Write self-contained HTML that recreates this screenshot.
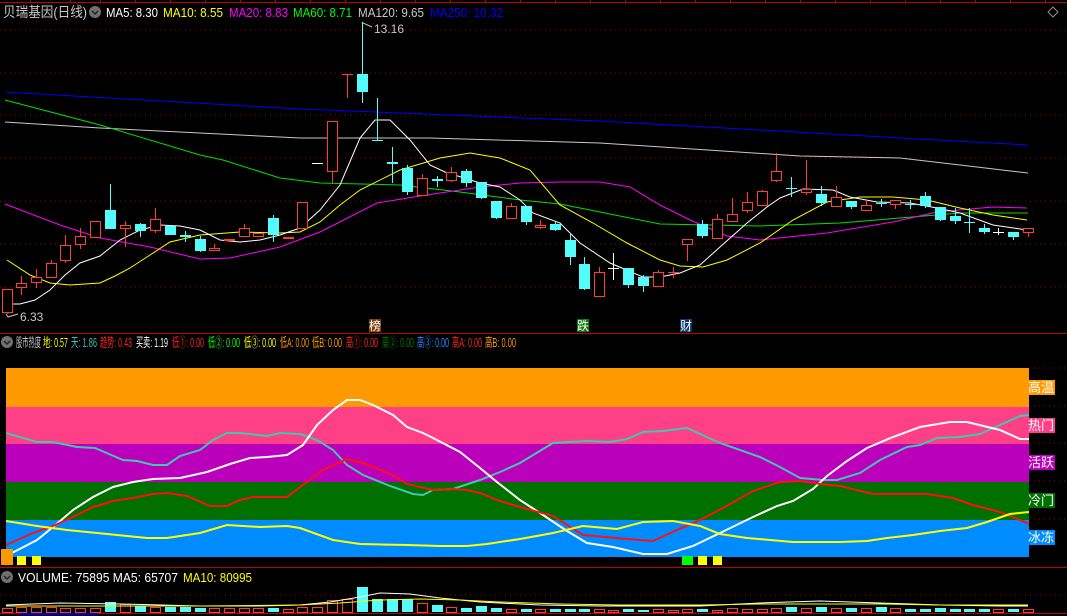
<!DOCTYPE html>
<html><head><meta charset="utf-8"><style>
html,body{margin:0;padding:0;background:#000;width:1067px;height:616px;overflow:hidden}
svg{display:block}
text{font-family:"Liberation Sans","Noto Sans CJK SC",sans-serif;font-size:12px}
</style></head><body>
<svg id="s" width="1067" height="616" xmlns="http://www.w3.org/2000/svg"></svg>
<script>
var o='';
function pl(pts,c,w){o+='<polyline fill="none" stroke="'+c+'" stroke-width="'+(w||1)+'" points="'+pts.map(function(p){return p.join(',')}).join(' ')+'"/>';}
function r(x,y,w,h,c){o+='<rect x="'+x+'" y="'+y+'" width="'+w+'" height="'+h+'" fill="'+c+'"/>';}
function t(x,y,s,c,fs,tl){o+='<text x="'+x+'" y="'+y+'" fill="'+c+'"'+(fs?' style="font-size:'+fs+'px"':'')+(tl?' textLength="'+tl+'" lengthAdjust="spacingAndGlyphs"':'')+'>'+s+'</text>';}
function dl(y,x1,x2){o+='<line x1="'+(x1||0)+'" y1="'+y+'" x2="'+(x2||1067)+'" y2="'+y+'" stroke="#a00000" stroke-dasharray="1 4"/>';}
r(0,2,1067,1,'#c00000');[30,70,100,135,170,205,240,275,310,345,380,415,450,485,520,555,590,625,660,695,730,765,800,835,870,905,940,975,1010,1045].forEach(function(x){r(x,0,1,2,'#c00000')});
[30,73,115,158,201,244,287].forEach(function(y){dl(y)});
pl([[5,92],[300,109],[600,121],[900,138],[1028,145]],'#0000ff');
pl([[5,122],[100,128],[300,138],[430,138],[600,143],[800,156],[900,158],[960,165],[1028,173]],'#c8c8c8');
pl([[5,100],[100,125],[200,155],[223,160],[280,178],[320,183],[400,185],[460,192],[520,200],[560,204],[600,212],[660,224],[760,226],[840,223],[900,218],[960,213],[1028,213]],'#00e000');
pl([[5,204],[60,225],[100,238],[150,247],[200,259],[230,258],[280,247],[320,232],[377,203],[420,196],[480,187],[520,183],[560,182],[600,182],[630,187],[660,205],[690,220],[727,236],[760,240],[827,233],[893,222],[937,212],[993,207],[1027,208]],'#ff00ff');
pl([[7,260],[30,275],[50,283],[70,285],[100,283],[115,276],[130,268],[150,255],[170,242],[200,235],[240,232],[280,233],[300,232],[320,222],[340,205],[360,190],[400,170],[440,158],[470,153],[500,158],[530,170],[560,205],[593,223],[627,243],[660,260],[680,266],[703,267],[727,260],[760,243],[793,220],[827,202],[860,197],[893,197],[927,200],[960,208],[993,215],[1027,220]],'#ffff00');
pl([[7,304],[20,304],[35,300],[50,290],[65,275],[80,263],[100,256],[120,240],[140,230],[160,225],[180,226],[200,230],[220,240],[240,242],[260,240],[280,235],[300,228],[320,210],[340,185],[360,138],[375,120],[390,120],[410,140],[430,165],[445,172],[480,183],[500,187],[520,200],[533,213],[560,223],[580,243],[610,263],[643,277],[660,277],[680,273],[700,265],[720,247],[747,223],[767,207],[780,198],[803,189],[833,190],[850,197],[877,202],[910,203],[937,208],[960,213],[993,225],[1027,230]],'#ffffff');
var C=[[7,289,313,289,314,'r'],[21,283,288,276,295,'r'],[36,277,283,269,288,'r'],[51,263,278,260,278,'r'],[65,245,261,235,263,'r'],[80,236,245,228,249,'r'],[95,221,238,221,238,'r'],[110,210,229,184,229,'c'],[125,225,229,221,247,'r'],[140,224,231,223,237,'c'],[155,219,231,208,233,'r'],[170,226,235,225,235,'c'],[185,235,237,231,242,'c'],[200,239,251,236,252,'c'],[214,248,251,244,251,'r'],[229,239,241,239,241,'r'],[244,228,237,224,237,'r'],[258,233,237,233,237,'r'],[273,218,235,215,242,'c'],[288,237,239,237,239,'r'],[302,202,229,202,229,'r'],[317,163,164,163,164,'w'],[332,121,172,121,184,'r'],[347,74,75,74,98,'r'],[362,74,92,22,103,'c'],[377,140,141,98,141,'c'],[392,162,164,147,183,'c'],[407,168,192,165,195,'c'],[422,178,196,174,196,'r'],[437,179,181,176,187,'c'],[451,172,181,167,182,'r'],[466,171,183,169,187,'c'],[481,182,198,182,199,'c'],[496,201,218,201,219,'c'],[511,206,219,203,219,'r'],[526,206,222,206,225,'c'],[540,225,228,220,229,'r'],[555,224,230,221,231,'c'],[570,240,257,233,265,'c'],[584,264,289,257,290,'c'],[599,272,297,267,297,'r'],[613,268,269,253,280,'w'],[628,268,285,268,288,'c'],[643,277,286,275,292,'c'],[658,272,287,270,287,'r'],[673,272,273,267,278,'r'],[687,239,245,239,261,'r'],[702,224,236,220,238,'c'],[717,219,239,214,239,'r'],[732,214,222,198,222,'r'],[747,202,211,192,213,'r'],[762,191,206,190,206,'r'],[776,171,181,153,182,'r'],[791,188,189,177,197,'c'],[806,189,193,160,195,'r'],[821,194,203,186,206,'c'],[836,197,207,186,207,'r'],[851,201,207,201,209,'c'],[866,205,211,200,211,'r'],[881,203,204,199,207,'c'],[895,200,205,200,209,'r'],[910,204,205,200,209,'c'],[925,196,206,192,208,'c'],[940,207,220,207,221,'c'],[955,216,221,208,224,'c'],[969,222,223,208,233,'c'],[984,228,232,224,234,'c'],[998,232,233,228,235,'w'],[1013,232,237,232,240,'c'],[1028,228,233,228,237,'r']];
C.forEach(function(c){var x=c[0],col=c[5]=='r'?'#ff3c3c':(c[5]=='c'?'#54fcfc':'#ffffff');
o+='<line x1="'+(x+.5)+'" y1="'+c[3]+'" x2="'+(x+.5)+'" y2="'+c[4]+'" stroke="'+col+'"/>';
var h=Math.max(1,c[2]-c[1]);
if(c[5]=='r'&&h>2)o+='<rect x="'+(x-4.5)+'" y="'+(c[1]+.5)+'" width="10" height="'+(h-1)+'" fill="#000" stroke="'+col+'"/>';
else r(x-5,c[1],11,h,col);});
o+='<polyline fill="none" stroke="#c8c8c8" points="362,22 363,23 372,27"/>';t(374,33,'13.16','#c8c8c8');
o+='<polyline fill="none" stroke="#c8c8c8" points="6,314 8,317 18,314"/>';t(20,321,'6.33','#c8c8c8');
o+='<polygon points="1053,7 1058,12 1053,17 1048,12" fill="none" stroke="#909090"/>';
t(3,17,'贝瑞基因(日线)','#c8c8c8',14,84);
o+='<circle cx="95" cy="12" r="6" fill="#707070"/><polyline points="92,11 95,14 98,11" fill="none" stroke="#222" stroke-width="1.5"/>';
t(106,17,'MA5: 8.30','#fff',13,52);t(163,17,'MA10: 8.55','#ff0',13,60);t(229,17,'MA20: 8.83','#f0f',13,59);t(293,17,'MA60: 8.71','#0f0',13,59);t(358,17,'MA120: 9.65','#c8c8c8',13,66);t(430,17,'MA250: 10.32','#0000ff',13,73);
r(369,319,12,13,'#7a3f0a');t(369,330,'榜','#fff');
r(577,319,12,13,'#087a08');t(577,330,'跌','#fff');
r(680,319,12,13,'#0a3a6a');t(680,330,'财','#fff');
r(0,333,1067,1,'#c00000');
o+='<circle cx="7" cy="342" r="6" fill="#707070"/><polyline points="4,341 7,344 10,341" fill="none" stroke="#222" stroke-width="1.5"/>';
var H=[[16,'股市热度','#c8c8c8',25],[43,'地: 0.57','#ff0',25],[71,'天: 1.86','#40c0b0',26],[100,'趋势: 0.43','#f22',32],[136,'买卖: 1.19','#fff',32],[172,'低①: 0.00','#f22',32],[208,'低②: 0.00','#0f0',32],[244,'低③: 0.00','#ff0',32],[280,'低A: 0.00','#f90',29],[312,'低B: 0.00','#f90',30],[346,'高①: 0.00','#f22',32],[382,'高②: 0.00','#070',32],[417,'高③: 0.00','#28f',32],[452,'高A: 0.00','#f22',30],[485,'高B: 0.00','#f90',31]];
H.forEach(function(h){t(h[0],347,h[1],h[2],13,h[3]);});
r(6,368,1023,39,'#ff9900');r(6,407,1023,37,'#ff3f86');r(6,444,1023,38,'#bb00bb');r(6,482,1023,38,'#007000');r(6,520,1023,37,'#008cff');
[368,406,443,481,519].forEach(function(y){dl(y,1029,1067)});
pl([[6,433],[37,442],[53,442],[77,447],[95,448],[123,460],[137,461],[153,465],[167,465],[180,456],[200,450],[213,440],[227,433],[240,433],[267,436],[280,433],[300,434],[317,440],[333,450],[347,465],[363,475],[390,486],[413,494],[423,495],[433,490],[453,489],[480,480],[500,472],[520,463],[553,443],[587,441],[610,442],[627,439],[643,432],[663,431],[687,428],[720,443],[760,457],[780,467],[800,478],[823,480],[837,480],[860,473],[880,460],[907,447],[920,445],[937,438],[960,437],[980,434],[1000,425],[1020,416],[1029,415]],'#40c8b0',2);
pl([[6,556],[37,540],[53,527],[73,510],[93,497],[113,487],[133,482],[153,479],[180,478],[207,472],[230,464],[250,458],[267,457],[287,455],[303,445],[317,425],[333,410],[347,400],[360,400],[373,405],[393,415],[407,427],[423,433],[433,438],[460,452],[480,468],[497,482],[520,500],[540,513],[567,531],[587,543],[613,547],[643,554],[667,554],[693,546],[720,533],[753,517],[777,506],[793,501],[813,489],[827,476],[847,461],[867,448],[893,437],[920,427],[950,422],[967,422],[1000,430],[1020,439],[1029,439]],'#fff',2);
pl([[6,545],[33,533],[53,526],[73,517],[93,507],[113,501],[133,498],[153,494],[167,493],[187,496],[210,506],[227,506],[240,500],[253,497],[273,497],[287,497],[303,485],[323,470],[347,459],[363,463],[393,475],[407,484],[433,490],[453,489],[467,490],[480,493],[500,501],[520,507],[553,516],[583,535],[627,539],[653,541],[677,530],[700,520],[723,508],[753,491],[780,482],[800,481],[820,484],[840,486],[873,494],[900,494],[927,494],[953,498],[973,505],[1000,512],[1020,520],[1029,524]],'#ff1010',2);
pl([[6,521],[37,526],[67,530],[87,532],[117,535],[147,538],[167,538],[200,533],[227,525],[260,527],[287,526],[300,528],[333,540],[360,544],[407,545],[440,546],[467,546],[487,544],[520,539],[553,533],[583,526],[617,529],[643,522],[673,521],[700,526],[720,534],[747,538],[793,542],[840,542],[867,541],[887,538],[913,535],[940,531],[967,528],[987,522],[1010,514],[1029,512]],'#ffff00',2);
var L=[[380,'高温','#ff9900'],[418,'热门','#ff3f86'],[455,'活跃','#bb00bb'],[493,'冷门','#007000'],[530,'冰冻','#008cff']];
L.forEach(function(l){r(1027,l[0],28,15,l[2]);t(1028,l[0]+12,l[1],'#fff',13);});
r(1,549,12,16,'#ff9900');r(17,556,9,9,'#ff0');r(32,556,9,9,'#ff0');
r(682,556,11,9,'#0f0');r(698,556,9,9,'#ff0');r(713,556,9,9,'#ff0');
r(0,567,1067,1,'#c00000');
o+='<circle cx="7" cy="577" r="6" fill="#707070"/><polyline points="4,576 7,579 10,576" fill="none" stroke="#222" stroke-width="1.5"/>';
t(18,582,'VOLUME: 75895  MA5: 65707','#fff',13,160);t(183,582,'MA10: 80995','#ff0',13,69);
dl(595);
var V=[4,5,5,5,4,4,4,10,8,6,5,5,5,4,4,4,4,4,4,3,5,5,12,13,25,13,13,13,9,7,5,4,6,4,3,3,3,3,3,3,3,2,3,2,3,2,3,3,2,4,3,3,4,5,4,5,4,4,4,5,4,3,3,4,3,3,3,3,3];
C.forEach(function(c,i){var h=V[i]||3,x=c[0];if(c[5]=='c')r(x-5,612-h,11,h,'#54fcfc');else o+='<rect x="'+(x-4.5)+'" y="'+(612.5-h)+'" width="10" height="'+(h)+'" fill="none" stroke="#ff3c3c"/>';});
pl([[6,605],[60,603],[120,604],[200,606],[260,606],[300,605],[330,602],[360,597],[380,593],[410,594],[440,598],[480,602],[540,605],[600,606],[700,606],[760,603],[820,601],[880,603],[940,605],[1000,606],[1028,606]],'#fff');
pl([[6,606],[100,606],[200,606],[300,605],[340,603],[380,600],[420,599],[460,600],[500,602],[560,604],[620,605],[700,605],[760,604],[820,604],[880,604],[940,605],[1028,605]],'#ff0');
r(0,613,1067,1,'#c00000');r(20,613,78,2,'#0000c0');
document.getElementById('s').innerHTML=o;
</script>
</body></html>
